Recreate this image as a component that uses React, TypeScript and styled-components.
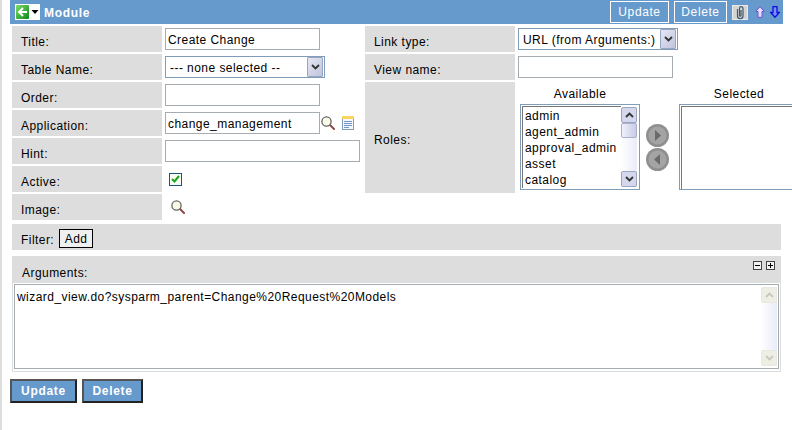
import React from "react";
import styled, { createGlobalStyle } from "styled-components";

const Global = createGlobalStyle`
  html, body { margin: 0; padding: 0; background: #fff; overflow: hidden; }
  body { font-family: "Liberation Sans", Arial, sans-serif; font-size: 12px; letter-spacing: 0.45px; color: #000; }
`;

const Page = styled.div`
  width: 792px;
  height: 430px;
  box-sizing: border-box;
  border-left: 2px solid #dddddd;
  padding-left: 8px;
  overflow: hidden;
`;

const Header = styled.div`
  width: 773px;
  height: 24px;
  background: #6699cc;
  display: flex;
  align-items: center;
  padding: 0 3px 0 5px;
  box-sizing: border-box;
`;

const Title = styled.span`
  font: bold 12px "Liberation Sans", Arial, sans-serif;
  letter-spacing: 0.7px;
  color: #fff;
  margin: 1px 0 0 4px;
  flex: 1;
`;

const HeaderButton = styled.button`
  height: 22px;
  margin: 0 5px 0 0;
  padding: 0;
  width: ${(p: { $w: number }) => p.$w}px;
  background: #6699cc;
  border: 1px solid #fff;
  color: #fff;
  font: 12px "Liberation Sans", Arial, sans-serif;
  letter-spacing: 0.6px;
`;

const IconGroup = styled.span`
  display: flex;
  align-items: center;
`;

const Form = styled.div`
  width: 769px;
  margin: 2px 0 0 2px;
  display: grid;
  grid-template-columns: 353px 416px;
`;

const Column = styled.div`
  display: flex;
  flex-direction: column;
  gap: 2px;
`;

const Row = styled.div`
  display: flex;
  height: ${(p: { $h?: number }) => p.$h ?? 26}px;
`;

const Label = styled.div`
  width: 150px;
  background: #dddddd;
  display: flex;
  align-items: center;
  padding: ${(p: { $top?: number }) => p.$top ?? 6}px 0 0 9px;
  box-sizing: border-box;
  flex: none;
`;

const Value = styled.div`
  display: flex;
  align-items: center;
  padding-left: 3px;
  flex: 1;
  min-width: 0;
`;

const TextInput = styled.input`
  width: ${(p: { $w: number }) => p.$w}px;
  height: 22px;
  box-sizing: border-box;
  border: 1px solid #a5acb2;
  padding: 2px 2px 0;
  font: 12px "Liberation Sans", Arial, sans-serif;
  letter-spacing: 0.45px;
  color: #000;
  outline: none;
  background: #fff;
`;

const SelectBox = styled.div`
  width: ${(p: { $w: number }) => p.$w}px;
  height: 22px;
  box-sizing: border-box;
  border: 1px solid #7f9db9;
  padding: 0 1px;
  display: flex;
  align-items: center;
  justify-content: space-between;
  background: #fff;
`;

const SelectText = styled.span`
  padding: 2px 0 0 3px;
  white-space: nowrap;
`;

const SelectArrow = styled.span`
  width: 16px;
  height: 20px;
  box-sizing: border-box;
  border: 1px solid #98a6c4;
  border-radius: 1px;
  background: linear-gradient(135deg, #e4e6f4, #c1c5dc);
  display: flex;
  align-items: center;
  justify-content: center;
  flex: none;
`;

const IconSlot = styled.span`
  display: inline-flex;
  margin-left: ${(p: { $ml?: number }) => p.$ml ?? 0}px;
`;

const CheckBox = styled.span`
  width: 13px;
  height: 13px;
  box-sizing: border-box;
  border: 1px solid #1c5180;
  background: #fbfbf6;
  margin: 0 0 0 4px;
  display: flex;
  align-items: center;
  justify-content: center;
`;

const RolesValue = styled.div`
  display: grid;
  grid-template-columns: 120px 39px 120px;
  grid-template-rows: 22px 86px;
  align-content: start;
  padding-left: 5px;
  flex: none;
`;

const Caption = styled.div`
  text-align: center;
  line-height: 24px;
  height: 22px;
`;

const ListBox = styled.div`
  height: 86px;
  box-sizing: border-box;
  border: 1px solid #7f9db9;
  padding: 1px 2px 1px 1px;
  display: flex;
  background: #fff;
`;

const ListItems = styled.div`
  flex: 1;
  padding: 1px 0 0 2px;
  line-height: 16px;
  border: solid #777;
  border-width: 1px 0 0 1px;
  white-space: nowrap;
  overflow: hidden;
`;

const ScrollTrack = styled.div`
  width: 16px;
  flex: none;
  margin: 1px 0;
  background: linear-gradient(90deg, #ffffff, #e9ecf8);
  display: flex;
  flex-direction: column;
  justify-content: space-between;
`;

const ThumbGroup = styled.div`
  display: flex;
  flex-direction: column;
`;

const ScrollButton = styled.div`
  width: 16px;
  height: 16px;
  box-sizing: border-box;
  border: 1px solid ${(p: { $off?: boolean }) => (p.$off ? "#e8e8e0" : "#9aa6c0")};
  border-radius: 2px;
  background: ${(p: { $off?: boolean }) => (p.$off ? "#eeeee4" : "#d5d8ec")};
  display: flex;
  align-items: center;
  justify-content: center;
`;

const Thumb = styled.div`
  width: 16px;
  height: 15px;
  box-sizing: border-box;
  border: 1px solid #a8b0cc;
  border-radius: 2px;
  background: linear-gradient(90deg, #f0f1fb, #c7cbe6);
`;

const MoveButtons = styled.div`
  display: flex;
  flex-direction: column;
  align-items: center;
  justify-content: center;
  gap: 1px;
  padding: 0 4px 0 0;
`;

const SelectedBox = styled.div`
  height: 86px;
  box-sizing: border-box;
  border: 1px solid #7f9db9;
  box-shadow: inset 1px 1px 0 #fff, inset 2px 2px 0 #777;
  background: #fff;
`;

const FilterBar = styled.div`
  width: 769px;
  height: 26px;
  margin: 4px 0 0 2px;
  background: #dddddd;
  display: flex;
  align-items: center;
  padding: 6px 0 0 9px;
  box-sizing: border-box;
  gap: 5px;
`;

const AddButton = styled.button`
  height: 19px;
  width: 34px;
  padding: 0;
  margin-top: -3px;
  background: #f0f0f0;
  border: 1px solid #000;
  font: 12px "Liberation Sans", Arial, sans-serif;
  letter-spacing: 0.45px;
  color: #000;
`;

const ArgsBar = styled.div`
  width: 769px;
  height: 27px;
  margin: 6px 0 0 2px;
  background: #dddddd;
  display: flex;
  justify-content: space-between;
  box-sizing: border-box;
  padding: 10px 6px 0 10px;
`;

const Toggles = styled.div`
  display: flex;
  gap: 4px;
  margin-top: -5px;
`;

const Toggle = styled.span`
  width: 9px;
  height: 9px;
  box-sizing: border-box;
  border: 1px solid #444;
  background: #f2f2f2;
  display: flex;
`;

const ArgsFrame = styled.div`
  width: 769px;
  height: 89px;
  margin-left: 2px;
  box-sizing: border-box;
  border: 1px solid #dddddd;
  border-top: 0;
  padding: 1px 1px 2px;
`;

const ArgsText = styled.div`
  height: 100%;
  box-sizing: border-box;
  border: 1px solid #a5acb2;
  display: flex;
  justify-content: space-between;
  padding: 1px;
`;

const ArgsContent = styled.div`
  padding: 4px 0 0 1px;
  white-space: nowrap;
`;

const Footer = styled.div`
  display: flex;
  gap: 5px;
  margin-top: 7px;
`;

const PrimaryButton = styled.button`
  height: 24px;
  width: ${(p: { $w: number }) => p.$w}px;
  padding: 0;
  background: #6699cc;
  border: 2px solid;
  border-color: #555 #222 #222 #555;
  color: #fff;
  font: bold 12px "Liberation Sans", Arial, sans-serif;
  letter-spacing: 0.7px;
`;

const Up = ({ c = "#333" }: { c?: string }) => (
  <svg width="9" height="8" viewBox="0 0 9 8"><path d="M1 6 4.500 2.500 8 6" fill="none" stroke={c} strokeWidth="1.800" /></svg>
);
const Down = ({ c = "#333" }: { c?: string }) => (
  <svg width="9" height="8" viewBox="0 0 9 8"><path d="M1 2 4.500 5.500 8 2" fill="none" stroke={c} strokeWidth="1.800" /></svg>
);

const Lens = () => (
  <svg width="14" height="14" viewBox="0 0 14 14">
    <path d="M8.500 8.500 13 13" stroke="#8a4a4a" strokeWidth="2" strokeLinecap="round" />
    <circle cx="5.500" cy="5.500" r="4.600" fill="#fbfbe6" stroke="#666" strokeWidth="1.300" />
  </svg>
);

const Note = () => (
  <svg width="12" height="14" viewBox="0 0 12 14">
    <rect x="0.500" y="0.500" width="11" height="13" fill="#f6f8fc" stroke="#7f9db9" />
    <rect x="0" y="0" width="12" height="3" fill="#fbd45f" />
    <path d="M2 5.500H10M2 7.500H10M2 9.500H10M2 11.500H7" stroke="#6f96c6" />
  </svg>
);

const Back = () => (
  <svg width="15" height="16" viewBox="0 0 15 16">
    <defs>
      <linearGradient id="backGreen" x1="0" y1="0" x2="1" y2="1">
        <stop offset="0" stopColor="#7fdc6a" />
        <stop offset="1" stopColor="#0c8a1c" />
      </linearGradient>
    </defs>
    <rect width="15" height="16" fill="#fff" />
    <rect x="1" y="1" width="13" height="14" rx="1" fill="url(#backGreen)" />
    <path d="M12 8H4M8 4 4 8l4 4" fill="none" stroke="#fff" strokeWidth="2" />
  </svg>
);

const Caret = () => (
  <svg width="10" height="16" viewBox="0 0 10 16">
    <rect width="10" height="16" fill="#fff" />
    <path d="M1.500 6h7L5 10z" fill="#000" />
  </svg>
);

const Clip = () => (
  <svg width="16" height="15" viewBox="0 0 16 15">
    <rect x="0.500" y="0.500" width="15" height="14" fill="#d4d4d4" stroke="#e8e8e8" />
    <path d="M5.500 4v7c0 3.500 5.500 3.500 5.500 0V3.500c0-2.500-3.500-2.500-3.500 0V10.500c0 1 1.500 1 1.500 0V5" fill="none" stroke="#44566a" strokeWidth="1.200" />
  </svg>
);

const ArrowUp = () => (
  <svg width="10" height="12" viewBox="0 0 10 12"><path d="M5 .7 9.300 5.500H7V11.300H3V5.500H.7z" fill="#e4dcfb" stroke="#6f55cc" /></svg>
);
const ArrowDown = () => (
  <svg width="10" height="12" viewBox="0 0 10 12"><path d="M5 11.300 9.300 6.500H7V.7H3V6.500H.7z" fill="#7f8cf0" stroke="#0a10e0" strokeWidth="1.300" /></svg>
);

const Round = ({ dir }: { dir: "l" | "r" }) => (
  <svg width="23" height="23" viewBox="0 0 23 23">
    <circle cx="11.500" cy="11.500" r="11.500" fill="#8f8f8f" />
    <circle cx="11.500" cy="11.500" r="9" fill="#a4a4a4" />
    <path d={dir === "r" ? "M9 6l6 5.500L9 17z" : "M14 6l-6 5.500L14 17z"} fill="#6a6a6a" />
  </svg>
);

export default function App() {
  return (
    <Page>
      <Global />
      <Header>
        <IconGroup><Back /><Caret /></IconGroup>
        <Title>Module</Title>
        <HeaderButton $w={59}>Update</HeaderButton>
        <HeaderButton $w={53}>Delete</HeaderButton>
        <IconGroup>
          <Clip />
          <IconSlot $ml={7}><ArrowUp /></IconSlot>
          <IconSlot $ml={5}><ArrowDown /></IconSlot>
        </IconGroup>
      </Header>
      <Form>
        <Column>
          <Row><Label>Title:</Label><Value><TextInput $w={155} defaultValue="Create Change" /></Value></Row>
          <Row>
            <Label>Table Name:</Label>
            <Value>
              <SelectBox $w={160}><SelectText>--- none selected --</SelectText><SelectArrow><Down /></SelectArrow></SelectBox>
            </Value>
          </Row>
          <Row><Label>Order:</Label><Value><TextInput $w={155} /></Value></Row>
          <Row>
            <Label>Application:</Label>
            <Value>
              <TextInput $w={155} defaultValue="change_management" />
              <IconSlot $ml={1}><Lens /></IconSlot>
              <IconSlot $ml={7}><Note /></IconSlot>
            </Value>
          </Row>
          <Row><Label>Hint:</Label><Value><TextInput $w={195} /></Value></Row>
          <Row>
            <Label>Active:</Label>
            <Value>
              <CheckBox>
                <svg width="9" height="8" viewBox="0 0 9 8"><path d="M1 4l2.500 2.500L8 1" fill="none" stroke="#1aa51a" strokeWidth="2" /></svg>
              </CheckBox>
            </Value>
          </Row>
          <Row><Label>Image:</Label><Value><IconSlot $ml={6}><Lens /></IconSlot></Value></Row>
        </Column>
        <Column>
          <Row>
            <Label>Link type:</Label>
            <Value>
              <SelectBox $w={160}><SelectText>URL (from Arguments:)</SelectText><SelectArrow><Down /></SelectArrow></SelectBox>
            </Value>
          </Row>
          <Row><Label>View name:</Label><Value><TextInput $w={155} /></Value></Row>
          <Row $h={111}>
            <Label $top={4}>Roles:</Label>
            <RolesValue>
              <Caption>Available</Caption>
              <span />
              <Caption>Selected</Caption>
              <ListBox>
                <ListItems>
                  <div>admin</div>
                  <div>agent_admin</div>
                  <div>approval_admin</div>
                  <div>asset</div>
                  <div>catalog</div>
                </ListItems>
                <ScrollTrack>
                  <ThumbGroup>
                    <ScrollButton><Up /></ScrollButton>
                    <Thumb />
                  </ThumbGroup>
                  <ScrollButton><Down /></ScrollButton>
                </ScrollTrack>
              </ListBox>
              <MoveButtons><Round dir="r" /><Round dir="l" /></MoveButtons>
              <SelectedBox />
            </RolesValue>
          </Row>
        </Column>
      </Form>
      <FilterBar>Filter:<AddButton>Add</AddButton></FilterBar>
      <ArgsBar>
        <span>Arguments:</span>
        <Toggles>
          <Toggle><svg width="7" height="7" viewBox="0 0 7 7"><path d="M1 3.500H6" stroke="#000" /></svg></Toggle>
          <Toggle><svg width="7" height="7" viewBox="0 0 7 7"><path d="M1 3.500H6M3.500 1V6" stroke="#000" /></svg></Toggle>
        </Toggles>
      </ArgsBar>
      <ArgsFrame>
        <ArgsText>
          <ArgsContent>wizard_view.do?sysparm_parent=Change%20Request%20Models</ArgsContent>
          <ScrollTrack>
            <ScrollButton $off><Up c="#c8c8c0" /></ScrollButton>
            <ScrollButton $off><Down c="#c8c8c0" /></ScrollButton>
          </ScrollTrack>
        </ArgsText>
      </ArgsFrame>
      <Footer>
        <PrimaryButton $w={67}>Update</PrimaryButton>
        <PrimaryButton $w={61}>Delete</PrimaryButton>
      </Footer>
    </Page>
  );
}
